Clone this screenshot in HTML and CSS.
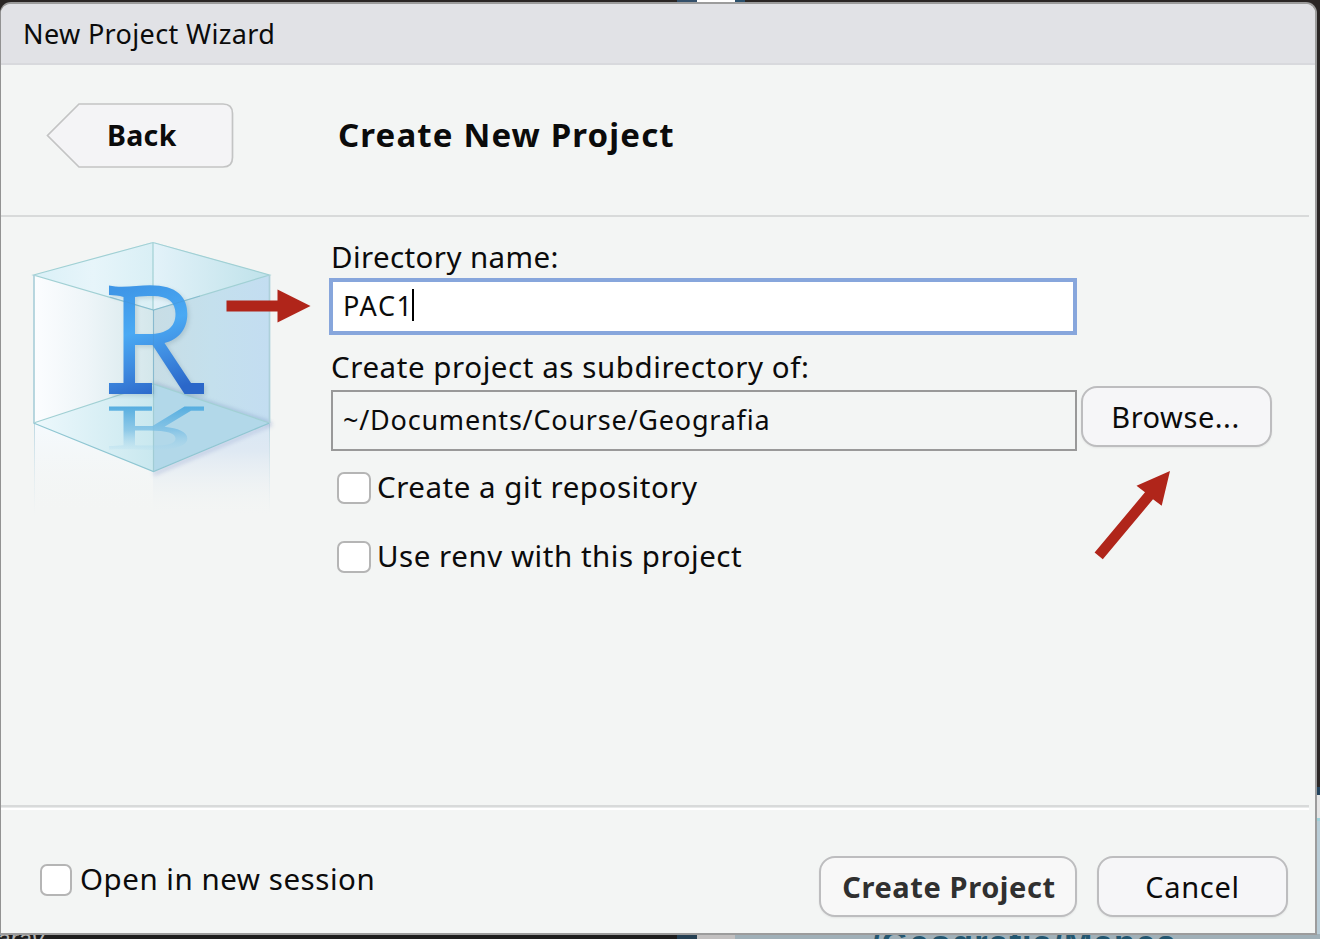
FILE: index.html
```html
<!DOCTYPE html>
<html lang="en">
<head>
<meta charset="utf-8">
<title>New Project Wizard</title>
<link rel="stylesheet" href="styles.css">
</head>
<body>
<div class="desktop">
  <div class="peek-top"><i class="peek-blue"></i><i class="peek-white"></i><i class="peek-navy"></i></div>
  <div class="peek-right"></div>
  <div class="peek-bottom"><span class="peek-left-text">arav</span><i class="peek-edge"></i><div class="peek-light"><span class="peek-path">/Geografia/Mapes</span></div></div>
  <main class="dialog">
    <header class="titlebar"><span class="t-title">New Project Wizard</span></header>
    <section class="heading">
      <button class="back">
        <svg class="back-shape" viewBox="0 0 188 66"><path d="M33 2H177Q186.500 2 186.500 11.500V55.500Q186.500 65 177 65H33L1.500 33.500Z" fill="#f4f4f6" stroke="#c3c4c4" stroke-width="1.700"/></svg>
        <span class="t-back">Back</span>
      </button>
      <h1 class="t-heading">Create New Project</h1>
    </section>
    <section class="content">
      <svg class="cube" viewBox="0 0 320 300">
        <defs>
          <linearGradient id="left"><stop offset="0" stop-color="#fcfdff"/><stop offset=".45" stop-color="#eef5f8"/><stop offset="1" stop-color="#d4e7eb"/></linearGradient>
          <linearGradient id="right"><stop offset="0" stop-color="#c8dde5"/><stop offset=".5" stop-color="#c4e0ed"/><stop offset="1" stop-color="#c3ddf1"/></linearGradient>
          <linearGradient id="topl"><stop offset="0" stop-color="#daf0f7"/><stop offset=".5" stop-color="#e7f5fa"/><stop offset="1" stop-color="#d9eff5"/></linearGradient>
          <linearGradient id="topr"><stop offset="0" stop-color="#e3f2f9"/><stop offset="1" stop-color="#bfe2ea"/></linearGradient>
          <linearGradient id="floorl"><stop offset="0" stop-color="#edf8fc"/><stop offset="1" stop-color="#c9e8ef"/></linearGradient>
          <linearGradient id="letter" x1=".25" y1="0" x2=".55" y2="1"><stop offset="0" stop-color="#3e96e7"/><stop offset=".4" stop-color="#4aa9f3"/><stop offset=".68" stop-color="#3f8ce1"/><stop offset="1" stop-color="#2b67c9"/></linearGradient>
          <linearGradient id="mirror" gradientUnits="userSpaceOnUse" x1="0" y1="163.500" x2="0" y2="55"><stop offset="0" stop-color="#55ade0"/><stop offset=".55" stop-color="#79bee4" stop-opacity=".75"/><stop offset="1" stop-color="#a8d7ed" stop-opacity=".15"/></linearGradient>
          <linearGradient id="fadel" x2="0" y2="1"><stop offset="0" stop-color="#f5fafe"/><stop offset="1" stop-color="#f3f5f4" stop-opacity="0"/></linearGradient>
          <linearGradient id="fader" x2="0" y2="1"><stop offset="0" stop-color="#d9e7f4"/><stop offset=".3" stop-color="#dfe9f3"/><stop offset="1" stop-color="#f3f5f4" stop-opacity="0"/></linearGradient>
          <linearGradient id="fadeline" gradientUnits="userSpaceOnUse" x1="0" y1="193" x2="0" y2="285"><stop offset="0" stop-color="#bdd8e2"/><stop offset="1" stop-color="#dce8ed" stop-opacity="0"/></linearGradient>
          <filter id="soft" x="-20%" y="-20%" width="140%" height="140%"><feGaussianBlur stdDeviation="2"/></filter>
          <path id="mark" fill-rule="evenodd" d="M99 55.500C112 58.500 127 55.300 140 55.300C167 55.300 177.300 67 177.300 84C177.300 100 168 109.500 154.500 113L181 153H194V164H174.500L142.500 115H125V153H142V164H99V153H113.500V67C109 65.500 104 65.300 99 65ZM125 67V104H139C157 104 165.500 97 165.500 84C165.500 72 158 66 143 66C136 66 130 66.300 125 67Z"/>
        </defs>
        <path d="M24 193 143 241V287H24Z" fill="url(#fadel)"/>
        <path d="M143 241 259.500 193V287H143Z" fill="url(#fader)"/>
        <path d="M24.500 194V285M259.500 194V285" stroke="url(#fadeline)" fill="none"/>
        <path d="M143.500 244 262 194" stroke="#8f9dcb" stroke-width="3" opacity=".45" filter="url(#soft)"/>
        <path d="M23.500 45 143 12V154L23.500 193Z" fill="url(#left)"/>
        <path d="M143 12 259.500 45V193L143 154Z" fill="url(#right)"/>
        <path d="M143 154 259.500 193" stroke="#7692bd" stroke-width="3" opacity=".55" filter="url(#soft)"/>
        <path d="M23.500 45 143 12V80Z" fill="url(#topl)"/>
        <path d="M143 12 259.500 45 143 80Z" fill="url(#topr)"/>
        <path d="M23.500 193 143 154V241.500Z" fill="url(#floorl)"/>
        <path d="M143 154 259.500 193 143 241.500Z" fill="#b2d8e9"/>
        <g fill="none" stroke="#a1d0d4" stroke-width="1.200"><path d="M23.500 45 143 12.500 259.500 45 143.500 80ZM143 12V80M23.500 193 143 154 259.500 193"/><path d="M23.500 193 143.500 241.500 259.500 193" stroke="#8fc6d2"/><path d="M24 45V193M259.500 45V193" stroke="#add0da" stroke-width="1.700"/><path d="M143.500 80V241" stroke="#9cc9d0" opacity=".8"/></g>
        <use href="#mark" transform="translate(2 2)" filter="url(#soft)" opacity=".2" fill="#446677"/>
        <use href="#mark" fill="url(#letter)"/>
        <use href="#mark" transform="matrix(1 0 0 -.4 0 242)" fill="url(#mirror)"/>
        <path d="M143.500 80V164M100 67 143.500 80 190 66" stroke="#4a8fc5" fill="none" opacity=".3"/>
      </svg>
      <div class="form">
        <label class="label t-dir">Directory name:</label>
        <div class="input"><span class="t-pac">PAC1</span><i class="caret"></i></div>
        <label class="label label-sub t-sub">Create project as subdirectory of:</label>
        <div class="path-row">
          <div class="path"><span class="t-path">~/Documents/Course/Geografia</span></div>
          <button class="btn browse"><span class="t-browse">Browse...</span></button>
        </div>
        <div class="check check-git"><i class="box"></i><span class="t-git">Create a git repository</span></div>
        <div class="check check-renv"><i class="box"></i><span class="t-renv">Use renv with this project</span></div>
      </div>
      <svg class="arrow-right" viewBox="0 0 86 36"><path d="M1.500 12.500H52.500V1.500L85.500 18 52.500 34.500V23.500H1.500Z" fill="#b0251a"/></svg>
      <svg class="arrow-up" viewBox="0 0 80 92"><path d="M76 1 67.700 35.700 59 29.300 8.800 89.300.6 82.500 51 22.300 42.500 15.700Z" fill="#b0251a"/></svg>
    </section>
    <footer class="footer">
      <div class="check session"><i class="box"></i><span class="t-session">Open in new session</span></div>
      <button class="btn create"><span class="t-create">Create Project</span></button>
      <button class="btn cancel"><span class="t-cancel">Cancel</span></button>
    </footer>
  </main>
</div>
</body>
</html>
```
FILE: styles.css
```css
* { box-sizing: border-box; }
body { margin: 0; background: #fff; font-family: "Noto Sans", "Open Sans", sans-serif; color: #0b0b0b; overflow: hidden; }
i { display: block; }
button { font: inherit; color: inherit; padding: 0; margin: 0; background: none; border: 0; }
span, .label, h1 { white-space: nowrap; }

.desktop { position: relative; width: 1320px; height: 939px; background: #2a2625; overflow: hidden; padding-top: 2px; }
.peek-top { position: absolute; left: 677px; top: 0; height: 2px; display: flex; }
.peek-blue { width: 20px; background: #34506b; }
.peek-white { width: 38px; background: #fff; }
.peek-navy { width: 10px; background: #2b506c; }
.peek-right { position: absolute; right: 0; top: 787px; width: 12px; height: 152px; background: linear-gradient(#23445e 0 8px, #e6e6e6 8px 31px, #9fd2da 31px 34px, #b9cdd7 34px); }
.peek-bottom { position: absolute; left: 0; top: 934px; width: 1320px; height: 5px; background: #1d1d1d; overflow: hidden; }
.peek-edge { position: absolute; left: 677px; top: 0; width: 20px; height: 5px; background: #243f52; }
.peek-light { position: absolute; left: 697px; top: 0; width: 623px; height: 5px; background: linear-gradient(90deg, #c2c0c0 0 38px, #a0b0b8 38px); overflow: hidden; }
.peek-path { position: absolute; left: 174px; top: -9px; font: bold 34px/34px "Liberation Sans", sans-serif; color: #23566f; letter-spacing: 1.4px; }
.peek-left-text { position: absolute; left: -3px; top: -7px; font: italic 24px/24px "Liberation Sans", sans-serif; color: #b5b5b5; }

.dialog { position: relative; width: 1317px; height: 933px; border: 2px solid #9c9c9c; border-left: 1px solid #929292; border-radius: 11px 11px 0 0; background: #f3f5f4; display: flex; flex-direction: column; overflow: hidden; }
.titlebar { height: 61px; flex: none; background: #e1e2e6; border-bottom: 2px solid #d8d9dd; padding: 0 0 0 22px; font-size: 27px; line-height: 59px; }
.heading { height: 152px; flex: none; width: 1308px; border-bottom: 2px solid #d8dada; display: flex; align-items: flex-start; padding: 37px 0 0 45px; }
.back { position: relative; width: 188px; height: 66px; font-weight: 700; font-size: 28.5px; line-height: 64px; text-align: left; padding-left: 61px; }
.back-shape { position: absolute; left: 0; top: 0; width: 188px; height: 66px; }
.back span { position: relative; display: block; }
.heading h1 { margin: 0 0 0 104px; font-size: 33px; line-height: 66px; font-weight: 700; }

.content { position: relative; height: 588px; flex: none; display: flex; }
.cube { width: 320px; height: 300px; flex: none; margin: 13px 0 0 9px; }
.form { width: 945px; margin: 23px 0 0 -1px; display: flex; flex-direction: column; align-items: flex-start; }
.label { height: 38px; font-size: 29.500px; line-height: 34px; margin-left: 2px; }
.input { width: 748px; height: 57px; border: 4px solid #87a6dc; background: #fff; display: flex; align-items: center; padding: 0 0 3px 10px; font-size: 27px; line-height: 47px; }
.caret { width: 2px; height: 32px; margin-left: -2px; background: #000; }
.label-sub { margin-top: 15px; height: 40px; }
.path-row { display: flex; align-items: flex-start; height: 65px; }
.path { width: 746px; height: 61px; margin-left: 2px; border: 2px solid #999; padding-left: 10px; font-size: 27px; line-height: 56px; }
.btn { border: 2px solid #bdbdbf; border-radius: 16px; background: #f6f6f8; font-size: 29px; line-height: 56px; height: 61px; box-shadow: 0 1px 2px #0001; text-align: center; }
.browse { width: 191px; margin: -4px 0 0 4px; padding-right: 2px; }
.check { display: flex; align-items: center; font-size: 29.500px; line-height: 36px; height: 36px; }
.box { width: 34px; height: 32px; border: 2px solid #b5b5b5; border-radius: 7px; background: #fff; }
.check-git { margin: 15px 0 0 8px; }
.check-renv { margin: 33px 0 0 8px; }
.check span { margin: -2px 0 0 6px; }

.arrow-right { position: absolute; left: 224px; top: 71px; width: 86px; height: 36px; }
.arrow-up { position: absolute; left: 1093px; top: 253px; width: 80px; height: 92px; }

.footer { flex: none; height: 128px; width: 1314px; display: flex; align-items: flex-start; position: relative; padding-top: 51px; background: linear-gradient(#d8dada 0 2px, #e8eaea 2px 3px, #fff 3px 5px, #f3f5f4 5px) 0 0 / 1308px 100% no-repeat; }
.session { margin: 6px 0 0 39px; width: 779px; }
.session .box { width: 32px; }
.session span { margin-left: 8px; }
.create { width: 258px; padding-left: 2px; font-weight: 700; color: #303030; background: #f8f8f8; }
.cancel { width: 191px; margin-left: 20px; }

.t-title { letter-spacing: .36px; }
.t-back { letter-spacing: .3px; }
.t-heading { letter-spacing: 1.15px; }
.t-dir { letter-spacing: .4px; }
.t-sub { letter-spacing: .57px; }
.t-pac { letter-spacing: 1.6px; }
.t-path { letter-spacing: .78px; }
.t-browse { letter-spacing: .55px; }
.t-create { letter-spacing: .6px; }
.t-cancel { letter-spacing: .7px; }
.t-git, .t-renv, .t-session { letter-spacing: .53px; }
```
